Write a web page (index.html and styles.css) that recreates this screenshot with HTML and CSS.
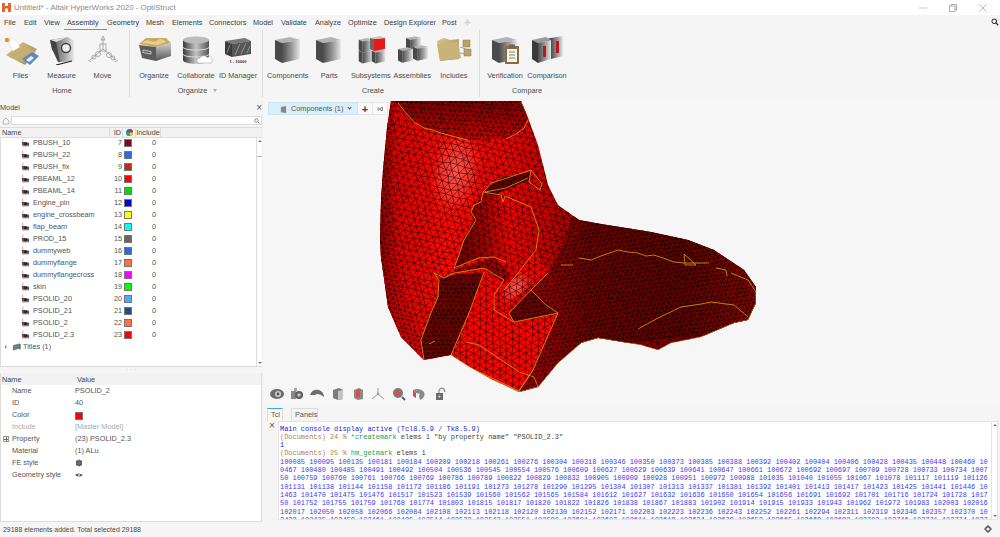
FILE: index.html
```html
<!DOCTYPE html>
<html lang="en">
<head>
<meta charset="utf-8">
<title>Altair HyperWorks 2020 - OptiStruct</title>
<link rel="stylesheet" href="styles.css">
</head>
<body>
<svg class="defs" aria-hidden="true">
  <defs>
    <linearGradient id="metal" x1="0" x2="1" y1="0" y2="0"><stop offset="0" stop-color="#4c4c4c"/><stop offset=".55" stop-color="#9a9a9a"/><stop offset="1" stop-color="#e8e8e8"/></linearGradient>
    <linearGradient id="metalv" x1="0" x2="0" y1="0" y2="1"><stop offset="0" stop-color="#cfcfcf"/><stop offset="1" stop-color="#555"/></linearGradient>
    <linearGradient id="disk" x1="0" x2="1" y1="0" y2="0"><stop offset="0" stop-color="#3a3a3a"/><stop offset=".5" stop-color="#c4c4c4"/><stop offset="1" stop-color="#555"/></linearGradient>
    <linearGradient id="tan" x1="0" x2="1" y1="0" y2="1"><stop offset="0" stop-color="#d8c590"/><stop offset="1" stop-color="#a08a50"/></linearGradient>
    <linearGradient id="front" gradientUnits="userSpaceOnUse" x1="378" x2="600" y1="0" y2="0"><stop offset="0" stop-color="#980000"/><stop offset=".08" stop-color="#dc0000"/><stop offset=".3" stop-color="#ff0800"/><stop offset=".6" stop-color="#f00000"/><stop offset=".8" stop-color="#b80000"/><stop offset="1" stop-color="#800000"/></linearGradient>
    <linearGradient id="topface" gradientUnits="userSpaceOnUse" x1="0" x2="0" y1="101" y2="140"><stop offset="0" stop-color="#860000"/><stop offset="1" stop-color="#d80000"/></linearGradient>
    <linearGradient id="flange" gradientUnits="userSpaceOnUse" x1="545" x2="756" y1="0" y2="0"><stop offset="0" stop-color="#a00000"/><stop offset=".2" stop-color="#740400"/><stop offset=".65" stop-color="#640400"/><stop offset="1" stop-color="#8c0800"/></linearGradient>
    <linearGradient id="pocket" gradientUnits="userSpaceOnUse" x1="455" x2="538" y1="0" y2="0"><stop offset="0" stop-color="#6a0000"/><stop offset=".35" stop-color="#a80000"/><stop offset=".65" stop-color="#f40000"/><stop offset="1" stop-color="#d00000"/></linearGradient>
    <radialGradient id="glow"><stop offset="0" stop-color="#ff5a54"/><stop offset=".6" stop-color="#ff3a34" stop-opacity=".7"/><stop offset="1" stop-color="#ff2010" stop-opacity="0"/></radialGradient>
    <g id="cubeg">
      <path d="M5 5 20 2 30 5 12 8Z" fill="#b4b4b4"/>
      <path d="M5 5 12 8V28L5 24Z" fill="#4a4a4a"/>
      <path d="M12 8 30 5V24L12 28Z" fill="url(#metal)"/>
    </g>
    <symbol id="ti" viewBox="0 0 10 10">
      <path d="M2 0V9" stroke="#d05a50" stroke-width=".6"/>
      <path d="M1 4H6L9 5V8H3L1 7Z" fill="#555"/><circle cx="5" cy="6" r="1.6" fill="#222"/><path d="M1 9H9" stroke="#d88" stroke-width=".5"/>
    </symbol>
  </defs>
</svg>

<header class="titlebar">
  <svg class="logo" viewBox="0 0 9 9"><path d="M0 0H3V3L6 3V0H9V9H6V5.500L3 5.500V9H0Z" fill="#e8622c"/></svg>
  <span class="title">Untitled* - Altair HyperWorks 2020 - OptiStruct</span>
  <div class="winctl">
    <svg viewBox="0 0 8 8"><path d="M0 4H8" stroke="#c8c8c8"/></svg>
    <svg viewBox="0 0 8 8"><path d="M.5 2H6V7.500H.5ZM2 2V.5H7.500V6H6" fill="none" stroke="#999" stroke-width=".8"/></svg>
    <svg viewBox="0 0 8 8"><path d="M.5 .5 7.500 7.500M7.500 .5 .5 7.500" stroke="#999" stroke-width=".7"/></svg>
  </div>
</header>

<nav class="menubar">
  <span class="m">File</span><span class="m">Edit</span><span class="m">View</span><span class="m on">Assembly</span><span class="m">Geometry</span><span class="m">Mesh</span><span class="m">Elements</span><span class="m">Connectors</span><span class="m">Model</span><span class="m">Validate</span><span class="m">Analyze</span><span class="m">Optimize</span><span class="m">Design Explorer</span><span class="m">Post</span>
  <svg class="plus" viewBox="0 0 8 8"><path d="M4 .5V7.500M.5 4H7.500" stroke="#d4d4d4" stroke-width="2"/></svg>
  <svg class="mag" viewBox="0 0 10 10"><circle cx="4" cy="4" r="2.800" fill="none" stroke="#333" stroke-width="1.300"/><path d="M6 6 9 9" stroke="#333" stroke-width="1.600"/></svg>
</nav>

<section class="ribbon">
  <div class="group g1">
    <div class="items">
      <div class="item"><svg viewBox="0 0 36 30"><path d="M3 20 20 7 34 14 22 30Z" fill="url(#tan)"/><path d="M6 22 21 11 33 17 20 27Z" fill="#c4ae70"/><path d="M19 24 29 17 36 21 27 30Z" fill="#5f88c0"/><path d="M23 25 28 21 31 23 26 27Z" fill="#e8eef8"/><path d="M5 6 11 3 17 12 10 16Z" fill="#fff" stroke="#ccc" stroke-width=".4"/><circle cx="4" cy="5" r="2.200" fill="#f08a20"/></svg><span>Files</span></div>
      <div class="item"><svg viewBox="0 0 36 30"><path d="M6 5 24 2 30 6V26L16 27 8 14Z" fill="url(#metal)"/><path d="M6 5 12 7 24 2Z" fill="#ddd"/><path d="M6 5 8 14 14 27 16 27 12 7Z" fill="#444"/><circle cx="22" cy="13" r="4.500" fill="#eee" stroke="#444" stroke-width="1.500"/><path d="M12 30 28 26" stroke="#222" stroke-width="1.200"/></svg><span>Measure</span></div>
      <div class="item"><svg viewBox="0 0 36 30"><g fill="none" stroke="#9a9a9a" stroke-width=".8"><path d="M18 3V14M18 14 5 25M18 14 31 25"/><path d="M16 5 18 1 20 5Z"/><rect x="15" y="9" width="6" height="7"/><circle cx="13" cy="19" r="2.500"/><circle cx="9" cy="22" r="2"/><circle cx="24" cy="20" r="2.500"/><circle cx="28" cy="23" r="2"/><path d="M3 25 6 27M33 25 30 27"/></g></svg><span>Move</span></div>
    </div>
    <div class="gname">Home</div>
  </div>
  <div class="group g2">
    <div class="items">
      <div class="item"><svg viewBox="0 0 36 30"><path d="M3 9 10 3H30L35 8 20 12Z" fill="#c9a860"/><path d="M6 8q4-4 8-2t8-1 8 2l-8 3Z" fill="#e2cf92"/><path d="M3 10 20 12V26L6 23Z" fill="#5c5c5c"/><path d="M20 12 35 8V21L20 26Z" fill="url(#metalv)"/><path d="M7 15 15 16.500V19L7 17.500Z" fill="none" stroke="#ddd" stroke-width=".8"/></svg><span>Organize</span></div>
      <div class="item"><svg viewBox="0 0 36 30"><path d="M5 5V25C5 30 31 30 31 25V5Z" fill="url(#disk)"/><ellipse cx="18" cy="5" rx="13" ry="3.500" fill="#bbb"/><path d="M5 12C5 16 31 16 31 12M5 19C5 23 31 23 31 19" fill="none" stroke="#ddd" stroke-width="1"/><path d="M21 28a2.500 2.500 0 0 1 1-5 4 4 0 0 1 7-.5 3 3 0 0 1 4 5.500Z" fill="#fff" stroke="#999" stroke-width=".5"/></svg><span>Collaborate</span></div>
      <div class="item"><svg viewBox="0 0 36 30"><path d="M5 6 25 3 31 6 12 9Z" fill="#777"/><path d="M5 6 12 9V22L5 19Z" fill="#3a3a3a"/><path d="M12 9 31 6V19L12 22Z" fill="#555"/><path d="M15 20 20 9M21 19 26 8M27 18 30 11M7 18 10 10" stroke="#bbb" stroke-width=".6"/><text x="18" y="28" class="idtxt">1 - 10000</text></svg><span>ID Manager</span></div>
    </div>
    <div class="gname">Organize <i class="caret"></i></div>
  </div>
  <div class="group g3">
    <div class="items">
      <div class="item"><svg viewBox="0 0 36 30"><use href="#cubeg"/></svg><span>Components</span></div>
      <div class="item"><svg viewBox="0 0 36 30"><use href="#cubeg"/></svg><span>Parts</span></div>
      <div class="item"><svg viewBox="0 0 36 30"><use href="#cubeg" transform="translate(3 13) scale(.55)"/><use href="#cubeg" transform="translate(16 13) scale(.55)"/><use href="#cubeg" transform="translate(3 2) scale(.55)"/><path d="M21 4 32 3V14L21 16Z" fill="#e81818"/><path d="M17 3 27 1 32 3 21 4Z" fill="#c8c8c8"/><path d="M17 3 21 4V16L17 14Z" fill="#666"/></svg><span>Subsystems</span></div>
      <div class="item"><svg viewBox="0 0 36 30"><use href="#cubeg" transform="translate(9 0) scale(.6)"/><use href="#cubeg" transform="translate(1 11) scale(.6)"/><use href="#cubeg" transform="translate(16 9) scale(.6)"/></svg><span>Assemblies</span></div>
      <div class="item"><svg viewBox="0 0 36 30"><path d="M1 6 8 3 14 5 23 4V24L4 26Z" fill="url(#tan)"/><path d="M1 9 22 7 25 23 4 26Z" fill="#c8b478"/><path d="M24 12 32 15M24 18 32 19" stroke="#666" stroke-width=".6"/><path d="M27 5H34V12H27ZM28 14H35V21H28Z" fill="#b8a468" stroke="#8a7a48" stroke-width=".5"/></svg><span>Includes</span></div>
    </div>
    <div class="gname">Create</div>
  </div>
  <div class="group g4">
    <div class="items">
      <div class="item"><svg viewBox="0 0 36 30"><use href="#cubeg"/><rect x="18" y="11" width="14" height="18" rx="1" fill="#8a6a40"/><rect x="20" y="14" width="10" height="13" fill="#f4f4f0"/><rect x="22" y="9.500" width="6" height="3" fill="#666"/><path d="M22 17H28M22 20H28M22 23H28" stroke="#6a9a60" stroke-width="1"/></svg><span>Verification</span></div>
      <div class="item"><svg viewBox="0 0 36 30"><path d="M22 3 34 1V21L22 24Z" fill="url(#metal)"/><path d="M18 4 22 3V24L18 22Z" fill="#333"/><path d="M27 6H30V18H27Z" fill="#b81a1a"/><path d="M3 5 17 2 22 5 9 8Z" fill="#999"/><path d="M3 5 9 8V28L3 24Z" fill="#3a3a3a"/><path d="M9 8 22 5V24L9 28Z" fill="url(#metal)"/><path d="M14 11H17V22H14Z" fill="#b81a1a"/></svg><span>Comparison</span></div>
    </div>
    <div class="gname">Compare</div>
  </div>
</section>

<main class="workspace">
  <aside class="left">
    <div class="phead"><span>Model</span><b class="x">×</b></div>
    <div class="search">
      <svg class="home" viewBox="0 0 8 8"><path d="M1 4 4 1 7 4V7H1Z" fill="none" stroke="#aaa" stroke-width=".8"/></svg>
      <div class="sbox"><svg viewBox="0 0 10 10"><circle cx="4" cy="4" r="2.800" fill="none" stroke="#555" stroke-width="1.100"/><path d="M6 6 9 9" stroke="#555" stroke-width="1.300"/></svg></div>
    </div>
    <div class="thead">
      <span class="c-name">Name</span><span class="c-id">ID</span>
      <span class="c-col"><svg viewBox="0 0 8 8"><circle cx="4" cy="4" r="4" fill="#2c6ee0"/><path d="M4 4V0A4 4 0 0 1 8 4Z" fill="#e02020"/><path d="M4 4H8A4 4 0 0 1 4 8Z" fill="#f0d020"/><path d="M4 4V8A4 4 0 0 1 0 4Z" fill="#30b040"/></svg></span>
      <span class="c-inc">Include</span><span class="c-rest"></span>
    </div>
    <div class="tree">
      <div class="rows">
        <div class="row"><svg class="ti"><use href="#ti"/></svg><span class="n">PBUSH_10</span><span class="d">7</span><i class="sw" style="background:#7a0a20"></i><span class="z">0</span></div>
        <div class="row"><svg class="ti"><use href="#ti"/></svg><span class="n">PBUSH_22</span><span class="d">8</span><i class="sw" style="background:#2a6ae8"></i><span class="z">0</span></div>
        <div class="row"><svg class="ti"><use href="#ti"/></svg><span class="n">PBUSH_fix</span><span class="d">9</span><i class="sw" style="background:#c02a10"></i><span class="z">0</span></div>
        <div class="row"><svg class="ti"><use href="#ti"/></svg><span class="n">PBEAML_12</span><span class="d">10</span><i class="sw" style="background:#ff0000"></i><span class="z">0</span></div>
        <div class="row"><svg class="ti"><use href="#ti"/></svg><span class="n">PBEAML_14</span><span class="d">11</span><i class="sw" style="background:#00e000"></i><span class="z">0</span></div>
        <div class="row"><svg class="ti"><use href="#ti"/></svg><span class="n">Engine_pin</span><span class="d">12</span><i class="sw" style="background:#0000e0"></i><span class="z">0</span></div>
        <div class="row"><svg class="ti"><use href="#ti"/></svg><span class="n">engine_crossbeam</span><span class="d">13</span><i class="sw" style="background:#ffff00"></i><span class="z">0</span></div>
        <div class="row"><svg class="ti"><use href="#ti"/></svg><span class="n">flap_beam</span><span class="d">14</span><i class="sw" style="background:#00ffff"></i><span class="z">0</span></div>
        <div class="row"><svg class="ti"><use href="#ti"/></svg><span class="n">PROD_15</span><span class="d">15</span><i class="sw" style="background:#666666"></i><span class="z">0</span></div>
        <div class="row"><svg class="ti"><use href="#ti"/></svg><span class="n">dummyweb</span><span class="d">16</span><i class="sw" style="background:#2a6ae8"></i><span class="z">0</span></div>
        <div class="row"><svg class="ti"><use href="#ti"/></svg><span class="n">dummyflange</span><span class="d">17</span><i class="sw" style="background:#ff7040"></i><span class="z">0</span></div>
        <div class="row"><svg class="ti"><use href="#ti"/></svg><span class="n">dummyflangecross</span><span class="d">18</span><i class="sw" style="background:#ff00ff"></i><span class="z">0</span></div>
        <div class="row"><svg class="ti"><use href="#ti"/></svg><span class="n">skin</span><span class="d">19</span><i class="sw" style="background:#00ff00"></i><span class="z">0</span></div>
        <div class="row"><svg class="ti"><use href="#ti"/></svg><span class="n">PSOLID_20</span><span class="d">20</span><i class="sw" style="background:#50a8ff"></i><span class="z">0</span></div>
        <div class="row"><svg class="ti"><use href="#ti"/></svg><span class="n">PSOLID_21</span><span class="d">21</span><i class="sw" style="background:#1f4f80"></i><span class="z">0</span></div>
        <div class="row"><svg class="ti"><use href="#ti"/></svg><span class="n">PSOLID_2</span><span class="d">22</span><i class="sw" style="background:#ff7040"></i><span class="z">0</span></div>
        <div class="row"><svg class="ti"><use href="#ti"/></svg><span class="n">PSOLID_2.3</span><span class="d">23</span><i class="sw" style="background:#ff0000"></i><span class="z">0</span></div>
        <div class="row titles"><i class="tri"></i><svg class="folder" viewBox="0 0 10 10"><path d="M1 3 8 1V7L1 9Z" fill="#6f7f8c"/><path d="M8 1 9.500 2V8L8 7Z" fill="#445"/></svg><span>Titles (1)</span></div>
      </div>
      <div class="vscroll"><i class="up"></i><i class="blue"></i><i class="dn"></i></div>
    </div>
    <div class="split">· · ·</div>
    <div class="props">
      <div class="phdr"><span>Name</span><span>Value</span></div>
      <div class="pr"><span>Name</span><span>PSOLID_2</span></div>
      <div class="pr"><span>ID</span><span>40</span></div>
      <div class="pr"><span>Color</span><span><i class="sw big"></i></span></div>
      <div class="pr dim"><span>Include</span><span>[Master Model]</span></div>
      <div class="pr"><i class="exp"></i><span>Property</span><span>(23) PSOLID_2.3</span></div>
      <div class="pr"><span>Material</span><span>(1) ALu</span></div>
      <div class="pr"><span>FE style</span><span><svg class="st" viewBox="0 0 8 8"><path d="M1 2 4 .5 7 2V6L4 7.500 1 6Z" fill="#555"/><path d="M1 4H7M4 1V7" stroke="#aaa" stroke-width=".4"/></svg></span></div>
      <div class="pr"><span>Geometry style</span><span><svg class="st" viewBox="0 0 8 8"><path d="M0 4Q3 1 8 4 4 7 0 4Z" fill="#555"/><circle cx="4" cy="4" r="1" fill="#ddd"/></svg></span></div>
    </div>
    <div class="status">29188 elements added. Total selected 29188</div>
  </aside>

  <section class="right">
    <div class="viewport">
      <svg class="model" viewBox="262 100 738 305" aria-label="Meshed red part">
        <defs>
          <clipPath id="sil"><path d="M390 101 386 128 382 170 380 200 379 240 380 257 387 307 400 337 423 360 450 355 467 366 490 379 518 392 537 387 557 363 580 343 597 338 640 345 657 350 670 343 700 337 733 323 747 320 755 303 755 287 743 270 713 250 687 240 650 232 600 224 578 220 557 205 547 185 537 145 527 118 520 101Z"/></clipPath>
          <clipPath id="rLeft"><path d="M375 95H393L390 200 398 280 420 340 423 362H375Z"/></clipPath>
          <clipPath id="rTop"><path d="M385 100H521L528 118 523 128 505 139 467 140 440 133 423 128 410 120 395 103Z"/></clipPath>
          <clipPath id="rFlange"><path d="M547 273 530 290 557 313 532 370 518 392 540 392 600 345 760 330 760 230 600 215 572 216 560 250Z"/></clipPath>
          <clipPath id="rStrip"><path d="M438 278 458 274 483 273 468 313 450 355 423 360 420 340 430 313 437 297Z"/></clipPath>
          <clipPath id="rFlap"><path d="M483 273 503 283 507 285 493 295 493 310 513 323 557 313 532 370 518 392 468 367 450 355 468 313Z"/></clipPath>
          <clipPath id="rPocket"><path d="M470 212 482 192 500 195 530 207 538 230 535 250 517 273 493 257 477 258 453 268 457 258 463 240 473 220Z"/></clipPath>
          <clipPath id="rBand"><path d="M453 270 493 257 510 275 503 283 483 268 453 273Z"/></clipPath>
          <clipPath id="rSlot"><path d="M484 190 500 178 530 172 528 180 490 196Z"/></clipPath>
          <clipPath id="rTri"><path d="M530 290 557 313 513 322 508 313Z"/></clipPath>
          <clipPath id="rShine"><path d="M507 285 517 273 535 250 547 273 510 300 508 313 493 310 493 295Z"/></clipPath>
        </defs>
        <g clip-path="url(#sil)">
          <rect x="370" y="95" width="400" height="300" fill="url(#front)"/>
          <ellipse cx="455" cy="172" rx="26" ry="46" fill="url(#glow)" transform="rotate(10 455 172)"/>
          <path class="mesh" data-s="7.200" data-a="14" data-j=".16"/>
          <g clip-path="url(#rLeft)"><rect x="370" y="95" width="60" height="270" fill="url(#front)"/><path class="mesh" data-s="5" data-a="14" data-j=".14"/></g>
          <g clip-path="url(#rTop)"><rect x="380" y="95" width="150" height="50" fill="url(#topface)"/><path class="mesh" data-s="5.200" data-a="4" data-j=".18"/></g>
          <g clip-path="url(#rPocket)"><rect x="450" y="188" width="92" height="88" fill="url(#pocket)"/><path class="mesh" data-s="7" data-a="22" data-j=".14"/></g>
          <g clip-path="url(#rBand)"><rect x="450" y="255" width="62" height="32" fill="#a00000"/><path class="mesh" data-s="5.500" data-a="20" data-j=".14"/></g>
          <g clip-path="url(#rFlange)"><rect x="520" y="210" width="245" height="190" fill="url(#flange)"/><path class="mesh" data-s="4.800" data-a="-8" data-j=".14"/></g>
          <g clip-path="url(#rStrip)"><rect x="415" y="270" width="70" height="95" fill="#740400"/><path class="mesh" data-s="5" data-a="60" data-j=".14"/></g>
          <g clip-path="url(#rFlap)"><rect x="445" y="265" width="115" height="130" fill="#fa0400"/><path class="mesh" data-s="7.500" data-a="30" data-j=".12"/></g>
          <g clip-path="url(#rSlot)"><rect x="480" y="165" width="55" height="35" fill="#6c0000"/><path class="mesh" data-s="5" data-a="20" data-j=".14"/></g>
          <g clip-path="url(#rTri)"><rect x="505" y="285" width="55" height="40" fill="#740400"/><path class="mesh" data-s="5" data-a="-8" data-j=".14"/></g>
          <g clip-path="url(#rShine)"><rect x="490" y="248" width="60" height="68" fill="#f40400"/><ellipse cx="515" cy="287" rx="13" ry="20" fill="url(#glow)" transform="rotate(40 515 287)"/><path class="mesh" data-s="7" data-a="30" data-j=".12"/></g>
          <g class="feat">
            <path d="M397 103 405 113 413 122 423 128 432 130 440 133 455 137 467 140M505 139 515 134 523 128 528 118 520 102"/>
            <path d="M482 192 490 183 500 180 515 175 530 170 541 184 539 190 528 182 530 170M484 192 505 188 527 178"/>
            <path d="M470 212 473 205 480 202 482 192 500 195 502 202 504 196 530 207 538 230 535 250 517 273 503 290M470 212 475 220 463 240 457 258 453 268"/>
            <path d="M433 273 443 278 453 273 483 268 503 280 493 295 493 310 513 322 557 313 532 370 518 391M453 268 477 258 493 257 505 262"/>
            <path d="M433 273 438 280 437 297 430 313 420 340 423 360M483 272 468 313 450 355 468 367 518 391 532 370"/>
            <path d="M547 273 530 290 508 313 513 322M530 290 545 305 557 313M465 342 478 345 518 372 533 377 537 387"/>
            <path d="M428 344 434 341M560 265 572 265M578 258 590 260 600 256 617 250 627 252 637 253 645 256 653 255 662 258 673 262 683 263 695 263 708 263M683 254 684 265 695 265 683 254M715 268 725 270 726 276M730 273 747 280 755 292 755 303 747 320 733 323 700 337 686 340 670 343 657 350 640 345 620 342 597 338 580 343 557 363 537 387 518 392 490 379 467 366 450 355"/>
            <path d="M637 329 657 318 680 307 700 304 710 302 733 305 747 317"/>
          </g>
        </g>
      </svg>
      <div class="vtabs">
        <div class="vtab"><svg viewBox="0 0 8 10"><path d="M1 2 7 1V9L1 8Z" fill="#888"/></svg>Components (1)<i class="chev"></i></div>
        <div class="vbtn plusb">+</div>
        <div class="vbtn"><svg viewBox="0 0 8 8"><path d="M1.500 1.500V6.500M7 1.500 3 4 7 6.500Z" fill="none" stroke="#555" stroke-width="1"/></svg></div>
      </div>
      <div class="tools">
        <svg viewBox="0 0 14 14"><ellipse cx="7" cy="7" rx="7" ry="5" fill="#555"/><circle cx="8" cy="7" r="3" fill="#ccc"/><circle cx="8" cy="7" r="1.400" fill="#333"/></svg>
        <svg viewBox="0 0 14 14"><rect x="1" y="4" width="5" height="8" fill="#777"/><circle cx="9" cy="8" r="4" fill="#444"/><circle cx="9" cy="8" r="1.800" fill="#bbb"/><path d="M4 1H7V4H4Z" fill="#999"/></svg>
        <svg viewBox="0 0 14 14"><path d="M0 8Q2 2 9 3 14 5 14 10L11 8Q7 6 5 8Z" fill="#555"/></svg>
        <svg viewBox="0 0 14 14"><path d="M2 3 8 1 12 3V12L7 13 2 11Z" fill="#666"/><path d="M7 4 12 3V12L7 13Z" fill="#bbb"/></svg>
        <svg viewBox="0 0 14 14"><path d="M3 3 8 1 12 3V12L7 13 3 11Z" fill="#777"/><path d="M5 3 9 2V10L5 11Z" fill="#d83030"/></svg>
        <svg viewBox="0 0 14 14"><path d="M7 1V7L1 12M7 7 13 12" fill="none" stroke="#888" stroke-width="1"/><circle cx="7" cy="7" r="1.200" fill="#888"/></svg>
        <svg viewBox="0 0 14 14"><circle cx="6" cy="6" r="5" fill="#666"/><circle cx="6" cy="6" r="2.600" fill="#e03030"/><path d="M10 10 13 13" stroke="#444" stroke-width="2"/></svg>
        <svg viewBox="0 0 14 14"><path d="M1 3Q8 0 12 5 14 10 8 13L7 9Q9 6 4 6Z" fill="#777"/><path d="M1 3 4 6V11L1 9Z" fill="#c83030"/></svg>
        <svg viewBox="0 0 14 14"><rect x="3" y="6" width="7" height="7" fill="#555"/><path d="M6 6V3Q8 0 11 2L12 5" fill="none" stroke="#777" stroke-width="1.200"/><circle cx="6.500" cy="9.500" r="1" fill="#ddd"/></svg>
      </div>
    </div>
    <div class="ctabs"><span class="ctab on">Tcl</span><span class="ctab">Panels</span></div>
    <div class="cbody">
      <b class="x cx">×</b>
      <div class="term">
<pre><span class="hd">Main console display active (Tcl8.5.9 / Tk8.5.9)</span>
<span class="pm">(Documents) 24 %</span> <span class="cm">*createmark</span> <span class="ar">elems 1 "by property name" "PSOLID_2.3"</span>
<span class="hd">1</span>
<span class="pm">(Documents) 25 %</span> <span class="cm">hm_getmark</span> <span class="ar">elems 1</span>
<span class="nm">100085 100095 100135 100181 100184 100209 100218 100261 100276 100304 100318 100346 100350 100373 100385 100388 100392 100402 100404 100406 100428 100435 100448 100460 10
0467 100480 100485 100491 100492 100504 100536 100545 100554 100576 100609 100627 100629 100639 100641 100647 100661 100672 100692 100697 100709 100728 100733 100734 1007
50 100759 100760 100761 100766 100769 100786 100789 100822 100829 100832 100905 100909 100928 100951 100972 100988 101035 101040 101055 101067 101078 101117 101119 101126
101131 101138 101144 101158 101172 101186 101191 101273 101278 101290 101295 101304 101307 101313 101337 101381 101392 101401 101413 101417 101423 101425 101441 101446 10
1463 101470 101475 101476 101517 101523 101539 101560 101562 101565 101584 101612 101627 101632 101636 101650 101654 101656 101691 101692 101701 101716 101724 101728 1017
50 101752 101755 101759 101768 101774 101803 101815 101817 101820 101822 101826 101838 101867 101883 101902 101914 101915 101933 101943 101962 101972 101983 102003 102016
102017 102050 102058 102066 102084 102108 102113 102118 102120 102130 102152 102171 102203 102223 102236 102243 102252 102261 102294 102311 102319 102346 102357 102370 10
2423 102435 102459 102461 102495 102514 102533 102543 102551 102590 102601 102607 102611 102619 102624 102639 102653 102665 102669 102692 102702 102746 102771 102774 1027</span></pre>
      </div>
      <div class="tscroll"><i class="up"></i><i class="dn"></i></div>
    </div>
    <div class="cfoot"><svg viewBox="0 0 10 10"><circle cx="5" cy="5" r="2.800" fill="none" stroke="#555" stroke-width="1.600"/><path d="M5 0V2M5 8V10M0 5H2M8 5H10" stroke="#555" stroke-width="1.400"/></svg></div>
  </section>
</main>
<script src="mesh.js"></script>
</body>
</html>
```
FILE: styles.css
```css
* { box-sizing: border-box; }
html, body { margin: 0; height: 100%; }
body {
  width: 1000px; height: 537px; overflow: hidden; display: flex; flex-direction: column;
  background: #f5f5f5; color: #4a4a4a;
  font: 7.300px/12px "Liberation Sans", Arial, sans-serif;
}
.defs { position: absolute; width: 0; height: 0; }

.titlebar { height: 15px; background: #fff; display: flex; align-items: center; flex: none; }
.logo { width: 9px; height: 9px; margin-left: 2px; }
.title { margin-left: 3px; font-size: 7.900px; color: #8a8a8a; }
.winctl { margin-left: auto; display: flex; gap: 22px; margin-right: 13px; }
.winctl svg { width: 8px; height: 8px; }

.menubar { height: 15px; flex: none; display: flex; align-items: center; padding-left: 4px; position: relative; }
.m { display: block; flex: none; line-height: 15px; height: 15px; white-space: nowrap; color: #3c3c3c; }
.m:nth-child(1), .m:nth-child(2) { width: 20px; }
.m:nth-child(3) { width: 23px; }
.m.on { width: 43.500px; margin-left: -3.500px; padding-left: 3.500px; border-bottom: 1px solid #3aa6dc; }
.m:nth-child(5) { width: 39px; }
.m:nth-child(6) { width: 26px; }
.m:nth-child(7) { width: 37px; }
.m:nth-child(8) { width: 44px; }
.m:nth-child(9) { width: 28px; }
.m:nth-child(10) { width: 34px; }
.m:nth-child(11) { width: 33px; }
.m:nth-child(12) { width: 36px; }
.m:nth-child(13) { width: 58px; }
.m:nth-child(14) { width: 22px; }
.plus { width: 7px; height: 7px; }
.mag { position: absolute; right: 1px; top: 3px; width: 8px; height: 8px; }

.ribbon { height: 70px; flex: none; display: flex; }
.group { border-right: 1px solid #dcdcdc; margin-bottom: 3px; display: flex; flex-direction: column; }
.g1 { width: 130px; }
.g2 { width: 133px; padding-left: 3px; }
.g3 { width: 217px; padding-left: 4px; }
.g4 { width: 90px; padding-left: 4px; border-right: 0; }
.items { display: flex; height: 55px; }
.item { width: 41.500px; display: flex; flex-direction: column; align-items: center; white-space: nowrap; }
.item svg { width: 36px; height: 30px; margin-top: 5px; flex: none; }
.item span { margin-top: 4.500px; line-height: 12px; }
.g1 .item { width: 41px; }
.g2 .item { width: 42px; }
.g4 .item { width: 42px; }
.gname { text-align: center; line-height: 12px; margin-top: 2px; }
.g1 .gname { width: 124px; }
.caret { display: inline-block; margin-left: 4px; border: 2.500px solid transparent; border-top: 3px solid #aaa; border-bottom: 0; vertical-align: 1px; }
.idtxt { font-size: 4px; font-weight: 700; text-anchor: middle; fill: #333; }

.workspace { flex: 1; display: flex; min-height: 0; }
.left { width: 262px; flex: none; display: flex; flex-direction: column; }
.phead { height: 15px; display: flex; justify-content: space-between; align-items: center; flex: none; }
.x { font-weight: 400; font-size: 10px; color: #555; line-height: 10px; }
.search { height: 11px; display: flex; align-items: center; flex: none; padding-left: 2px; }
.home { width: 8px; height: 8px; margin-right: 1px; }
.sbox { flex: 1; height: 9px; background: #fff; border: 1px solid #dcdcdc; display: flex; justify-content: flex-end; align-items: center; }
.sbox svg { width: 6px; height: 6px; margin-right: 1px; }
.thead { height: 11px; margin-top: 1px; display: flex; background: #f2f2f2; border-top: 1px solid #ddd; border-bottom: 1px solid #ddd; line-height: 9px; flex: none; }
.thead span { display: block; border-right: 1px solid #dcdcdc; }
.c-name { width: 110px; padding-left: 2px; }
.c-id { width: 13px; text-align: right; padding-right: 1px; }
.c-col { width: 13px; display: flex !important; justify-content: center; align-items: center; }
.c-col svg { width: 7px; height: 7px; }
.c-inc { width: 25px; text-align: center; }
.c-rest { flex: 1; border-right: 0 !important; }
.tree { height: 229px; flex: none; background: #fff; border-left: 1px solid #dcdcdc; border-bottom: 1px solid #dcdcdc; display: flex; }
.rows { flex: 1; margin-top: -1px; }
.row { height: 12px; display: grid; grid-template-columns: 12px 77px 12px 10px 24px; padding-left: 20px; align-items: center; white-space: nowrap; color: #555; }
.ti { width: 9px; height: 10px; }
.d { text-align: right; }
.sw { display: block; width: 8px; height: 8px; border: 1px solid #777; }
.row .sw { margin-left: 2px; }
.z { text-align: right; }
.row.titles { display: flex; padding-left: 0; }
.tri { width: 0; height: 0; margin: 0 5px 0 4px; border: 2px solid transparent; border-left: 2.500px solid #888; border-right: 0; }
.folder { width: 9px; height: 10px; margin-right: 2px; }
.vscroll { width: 6px; border-left: 1px solid #dcdcdc; position: relative; background: #fff; }
.vscroll .blue { position: absolute; left: 0; right: 0; top: 18px; border-top: 1px solid #7cc8ec; }
.up, .dn { position: absolute; left: 1px; width: 0; height: 0; border: 2px solid transparent; }
.up { top: 2px; border-bottom: 2px solid #777; border-top: 0; }
.dn { bottom: 2px; border-top: 2px solid #777; border-bottom: 0; }
.split { height: 6px; text-align: center; font-size: 6px; line-height: 5px; color: #999; flex: none; }
.props { height: 149px; background: #fff; border: 1px solid #dcdcdc; border-top: 0; flex: none; }
.phdr { height: 12px; background: #f2f2f2; display: grid; grid-template-columns: 75px 1fr; padding-left: 1px; color: #444; line-height: 13px; }
.pr { height: 12px; display: grid; grid-template-columns: 63px 1fr; padding-left: 11px; position: relative; color: #555; align-items: center; }
.pr.dim { color: #aaa; }
.exp { position: absolute; left: 2px; top: 3px; width: 6px; height: 6px; border: 1px solid #999; background: linear-gradient(#666,#666) center/4px 1px no-repeat, linear-gradient(#666,#666) center/1px 4px no-repeat; }
.sw.big { width: 8px; height: 8px; background: #f00; margin-top: 1px; }
.st { display: block; width: 8px; height: 8px; }
.status { flex: 1; line-height: 16px; padding-left: 3px; font-size: 6.950px; }

.right { flex: 1; display: flex; flex-direction: column; min-width: 0; }
.viewport { height: 305px; flex: none; position: relative; background: #f6f6f6; border-left: 1px solid #f0f0f0; }
.model { position: absolute; left: 0; top: 0; width: 738px; height: 305px; overflow: visible; }
.mesh { fill: none; stroke: #000; stroke-width: .6; stroke-opacity: .85; }
.feat path { fill: none; stroke: #e09a18; stroke-width: .8; }
.vtabs { position: absolute; left: 5px; top: 2px; height: 13px; display: flex; }
.vtab { width: 90px; background: #d9f0fb; border: 1px solid #cfe3ee; display: flex; align-items: center; padding-left: 22px; position: relative; color: #555; white-space: nowrap; }
.vtab svg { position: absolute; left: 11px; top: 2px; width: 7px; height: 9px; }
.chev { width: 3px; height: 3px; margin: -2px 0 0 5px; border-right: 1px solid #555; border-bottom: 1px solid #555; transform: rotate(45deg); }
.vbtn { width: 15px; background: #fafafa; border: 1px solid #e4e4e4; border-left: 0; display: flex; align-items: center; justify-content: center; }
.vbtn svg { width: 6px; height: 6px; }
.plusb { font-size: 11px; font-weight: 700; color: #444; }
.tools { position: absolute; left: 6.500px; top: 287px; display: flex; gap: 6.400px; }
.tools svg { width: 14px; height: 14px; opacity: .85; }
.ctabs { height: 15px; margin-top: 1px; display: flex; gap: 8px; padding-left: 5px; flex: none; align-items: flex-end; }
.ctab { height: 13px; padding: 0 3px; line-height: 12px; border: 1px solid #dcdcdc; border-bottom: 0; color: #555; }
.ctab.on { border-top: 1px solid #3aa6dc; background: #f8f8f8; width: 16px; }
.ctab:not(.on) { width: 27px; }
.cbody { height: 99px; flex: none; display: flex; position: relative; padding-left: 16px; padding-right: 2px; }
.cx { position: absolute; left: 7px; top: 0; }
.term { flex: 1; min-width: 0; height: 99px; background: #fff; border: 1px solid #e4e4e4; overflow: hidden; padding: 2.500px 0 0 1px; }
pre { margin: 0; font: 6.950px/8.330px "Liberation Mono", "Courier New", monospace; }
.hd { color: #2424d8; }
.pm { color: #b08058; }
.cm { color: #28a048; }
.ar { color: #444; }
.nm { color: #3c3cf0; }
.tscroll { width: 6px; background: #fff; border: 1px solid #e4e4e4; border-left: 0; position: relative; }
.tscroll .up, .tscroll .dn { left: 1px; }
.cfoot { flex: 1; display: flex; justify-content: flex-end; align-items: center; padding-right: 8px; }
.cfoot svg { width: 8px; height: 8px; }
```
FILE: mesh.js
```js
// Fills each .mesh path with a slightly irregular triangular lattice.
(function () {
  var seed = 12345;
  function rnd() { seed = (seed * 16807) % 2147483647; return seed / 2147483647 - 0.5; }
  document.querySelectorAll('.mesh').forEach(function (el) {
    var s = +el.dataset.s, a = +el.dataset.a * Math.PI / 180, j = +el.dataset.j * s;
    var cx = 570, cy = 245, n = Math.ceil(300 / s), pts = {};
    function p(i, k) {
      var id = i + ',' + k;
      if (!pts[id]) {
        var x = (i + k / 2) * s + rnd() * 2 * j, y = k * s * 0.866 + rnd() * 2 * j;
        pts[id] = (cx + x * Math.cos(a) - y * Math.sin(a)).toFixed(1) + ' ' + (cy + x * Math.sin(a) + y * Math.cos(a)).toFixed(1);
      }
      return pts[id];
    }
    var d = [];
    for (var i = -n * 2; i < n * 2; i++) {
      for (var k = -n; k < n; k++) {
        var o = p(i, k);
        d.push('M' + o + 'L' + p(i + 1, k), 'M' + o + 'L' + p(i, k + 1), 'M' + p(i + 1, k) + 'L' + p(i, k + 1));
      }
    }
    el.setAttribute('d', d.join(''));
  });
})();
```
